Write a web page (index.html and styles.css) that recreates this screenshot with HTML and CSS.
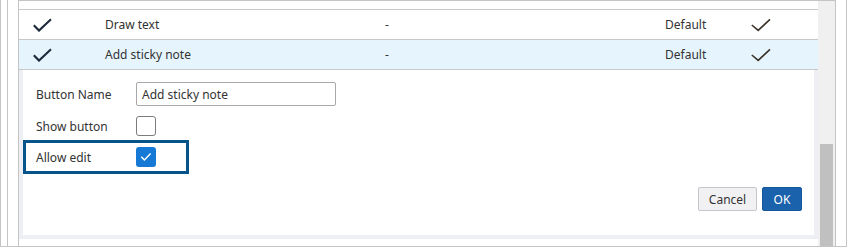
FILE: index.html
```html
<!DOCTYPE html>
<html>
<head>
<meta charset="utf-8">
<link rel="stylesheet" href="styles.css">
</head>
<body>
<div class="outer">
  <div class="mid">
    <div class="inner">
      <div class="main">
        <div class="row head"></div>
        <div class="row">
          <div class="c1"><svg class="chk" width="20" height="14" viewBox="0 0 20 14"><path d="M0.8 7.2 L6 12.6 L18 1.3"/></svg></div>
          <div class="c2">Draw text</div>
          <div class="c3">-</div>
          <div class="c4">Default</div>
          <div class="c5"><svg class="chk2" width="20" height="14" viewBox="0 0 20 14"><path d="M0.8 7 L7.2 12.4 L19 1.3"/></svg></div>
        </div>
        <div class="row sel">
          <div class="c1"><svg class="chk" width="20" height="14" viewBox="0 0 20 14"><path d="M0.8 7.2 L6 12.6 L18 1.3"/></svg></div>
          <div class="c2">Add sticky note</div>
          <div class="c3">-</div>
          <div class="c4">Default</div>
          <div class="c5"><svg class="chk2" width="20" height="14" viewBox="0 0 20 14"><path d="M0.8 7 L7.2 12.4 L19 1.3"/></svg></div>
        </div>
        <div class="panel">
          <div class="field f1">
            <span class="lbl">Button Name</span>
            <div class="input">Add sticky note</div>
          </div>
          <div class="field f2">
            <span class="lbl">Show button</span>
            <span class="cb"></span>
          </div>
          <div class="field hl">
            <span class="lbl">Allow edit</span>
            <span class="cb on"><svg width="20" height="20" viewBox="0 0 20 20"><path d="M5.3 9.8 L8.4 13 L14.6 6.6"/></svg></span>
          </div>
          <div class="actions">
            <button class="btn">Cancel</button>
            <button class="btn primary">OK</button>
          </div>
        </div>
      </div>
      <div class="track"><div class="thumb"></div></div>
    </div>
  </div>
</div>
</body>
</html>
```

FILE: styles.css
```css
html, body {
  margin: 0;
  padding: 0;
  background: #ffffff;
}
body {
  font-family: "Noto Sans", "Open Sans", sans-serif;
  font-size: 12px;
  color: #333333;
}
.outer {
  box-sizing: border-box;
  width: 847px;
  height: 247px;
  border-left: 1px solid #c4c4c4;
  border-right: 1px solid #c4c4c4;
  border-bottom: 1px solid #c4c4c4;
  padding-left: 6px;
  padding-right: 10px;
  display: flex;
}
.mid {
  flex: 1;
  display: flex;
  border-left: 1px solid #c4c4c4;
  padding-left: 10px;
}
.inner {
  flex: 1;
  display: flex;
  border-left: 1px solid #c4c4c4;
  border-right: 1px solid #c4c4c4;
  border-top: 1px solid #c4c4c4;
}
.main {
  width: 799px;
  display: flex;
  flex-direction: column;
}
.track {
  flex: 1;
  background: #f0f0f0;
  display: flex;
  flex-direction: column;
  justify-content: flex-end;
}
.thumb {
  height: 102px;
  width: 13px;
  margin-left: 2px;
  background: #c0c0c0;
}
.row {
  display: flex;
  align-items: center;
  height: 29px;
  border-bottom: 1px solid #c8c8c8;
  white-space: nowrap;
}
.row.head {
  height: 8px;
}
.row.sel {
  background: #e6f5fd;
}
.c1 {
  width: 86px;
  display: flex;
}
.c1 .chk {
  margin-left: 14px;
}
.c2 { width: 280px; }
.c3 { width: 280px; }
.c4 { width: 86px; }
.c5 { display: flex; }
.chk path {
  fill: none;
  stroke: #1d2a3c;
  stroke-width: 2.1;
}
.chk2 path {
  fill: none;
  stroke: #3a3128;
  stroke-width: 1.6;
}
.panel {
  height: 169px;
  box-sizing: border-box;
  border-left: 4px solid #eeeff5;
  border-right: 4px solid #eeeff5;
  border-bottom: 4px solid #eeeff5;
  padding-top: 12px;
  display: flex;
  flex-direction: column;
}
.field {
  display: flex;
  align-items: center;
  padding-left: 13px;
}
.lbl {
  width: 100px;
}
.f1 { height: 24px; }
.f2 { height: 20px; margin-top: 10px; }
.input {
  box-sizing: border-box;
  width: 200px;
  height: 24px;
  border: 1px solid #a8a8a8;
  border-radius: 2px;
  padding-left: 5px;
  display: flex;
  align-items: center;
}
.cb {
  box-sizing: border-box;
  width: 20px;
  height: 20px;
  border: 1px solid #7c7c7c;
  border-radius: 3px;
  background: #fff;
  display: block;
}
.cb.on {
  border: none;
  background: #1579d5;
}
.cb.on svg {
  display: block;
}
.cb.on path {
  fill: none;
  stroke: #ffffff;
  stroke-width: 1.5;
}
.hl {
  box-sizing: border-box;
  width: 166px;
  height: 34px;
  margin-top: 4px;
  border: 3px solid #07548b;
  padding-left: 10px;
}
.actions {
  display: flex;
  justify-content: flex-end;
  gap: 5px;
  margin-top: 13px;
  padding-right: 12px;
}
.btn {
  box-sizing: border-box;
  height: 24px;
  font-family: "Noto Sans", "Open Sans", sans-serif;
  font-size: 12px;
  border-radius: 2px;
  padding: 0;
  cursor: pointer;
  width: 59px;
  background: #f1f1f4;
  border: 1px solid #c5c5cb;
  color: #333333;
}
.btn.primary {
  width: 40px;
  background: #1b62ad;
  border: 1px solid #16579b;
  color: #ffffff;
}
```
